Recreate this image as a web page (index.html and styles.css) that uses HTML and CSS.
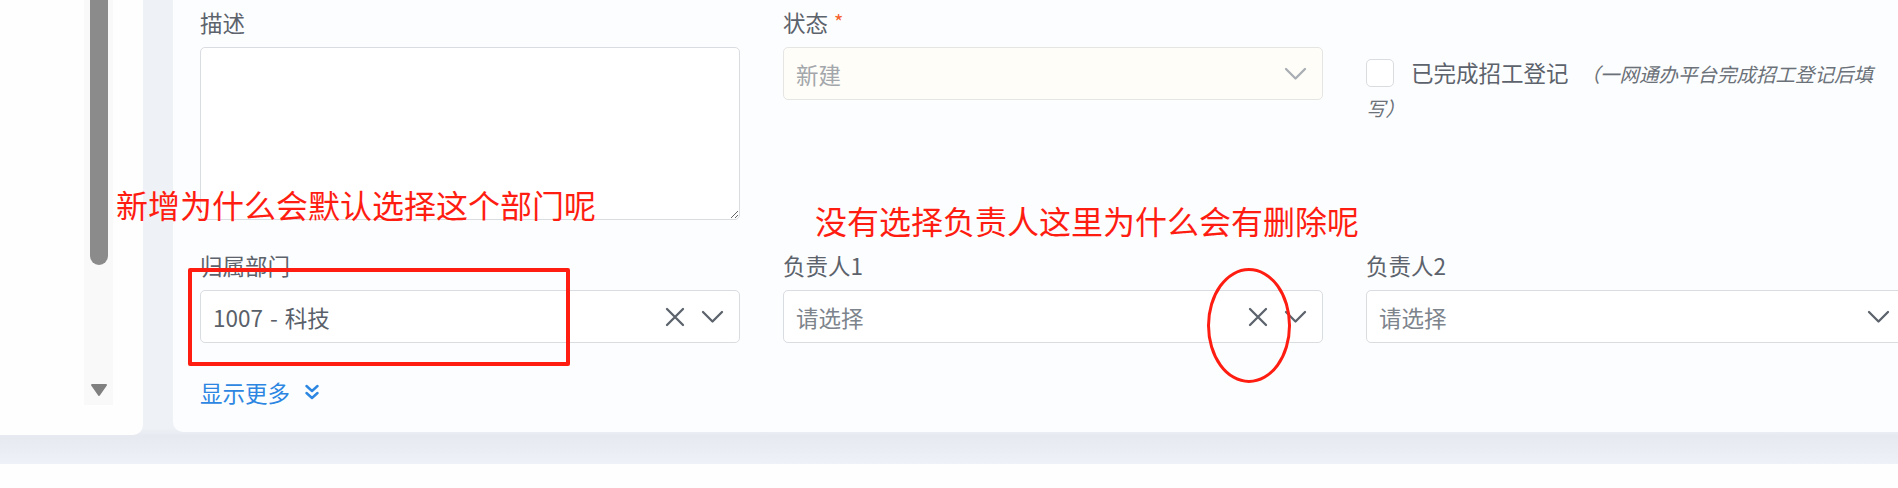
FILE: index.html
```html
<!DOCTYPE html>
<html lang="zh-CN">
<head>
<meta charset="utf-8">
<title>表单</title>
<link rel="stylesheet" href="styles.css">
</head>
<body>
<div class="app">
  <div class="top">
    <aside class="sidebar">
      <div class="scroll-track">
        <div class="scroll-thumb"></div>
        <svg class="scroll-arrow" width="18" height="14" viewBox="0 0 18 14"><path d="M2 2 H16 L9 12 Z" fill="#808080" stroke="#808080" stroke-width="2" stroke-linejoin="round"/></svg>
      </div>
    </aside>
    <main class="card">
      <div class="form-grid">
        <div class="field">
          <div class="label">描述</div>
          <textarea class="textarea"></textarea>
        </div>
        <div class="field">
          <div class="label">状态<span class="req">*</span></div>
          <div class="select disabled">
            <span class="value">新建</span>
            <svg class="chev" width="23" height="14" viewBox="0 0 23 14"><path d="M2 2 L11.5 11.5 L21 2" fill="none" stroke="#a9aeb4" stroke-width="2.3" stroke-linecap="round" stroke-linejoin="round"/></svg>
          </div>
        </div>
        <div class="field check-field">
          <span class="checkbox"></span><span class="check-label">已完成招工登记</span><span class="note">（一网通办平台完成招工登记后填写）</span>
        </div>

        <div class="field">
          <div class="label">归属部门</div>
          <div class="select">
            <span class="value filled">1007 - 科技</span>
            <svg class="clear" width="20" height="20" viewBox="0 0 20 20"><path d="M2 2 L18 18 M18 2 L2 18" stroke="#5c636c" stroke-width="2.3" stroke-linecap="round"/></svg>
            <svg class="chev" width="23" height="14" viewBox="0 0 23 14"><path d="M2 2 L11.5 11.5 L21 2" fill="none" stroke="#5c636c" stroke-width="2.3" stroke-linecap="round" stroke-linejoin="round"/></svg>
          </div>
        </div>
        <div class="field">
          <div class="label">负责人1</div>
          <div class="select">
            <span class="value placeholder">请选择</span>
            <svg class="clear" width="20" height="20" viewBox="0 0 20 20"><path d="M2 2 L18 18 M18 2 L2 18" stroke="#5c636c" stroke-width="2.3" stroke-linecap="round"/></svg>
            <svg class="chev" width="23" height="14" viewBox="0 0 23 14"><path d="M2 2 L11.5 11.5 L21 2" fill="none" stroke="#5c636c" stroke-width="2.3" stroke-linecap="round" stroke-linejoin="round"/></svg>
          </div>
        </div>
        <div class="field">
          <div class="label">负责人2</div>
          <div class="select">
            <span class="value placeholder">请选择</span>
            <svg class="chev" width="23" height="14" viewBox="0 0 23 14"><path d="M2 2 L11.5 11.5 L21 2" fill="none" stroke="#5c636c" stroke-width="2.3" stroke-linecap="round" stroke-linejoin="round"/></svg>
          </div>
        </div>
      </div>
      <a class="more">显示更多<svg width="14" height="16" viewBox="0 0 14 16"><path d="M1.5 2 L7 7 L12.5 2 M1.5 9 L7 14 L12.5 9" fill="none" stroke="#2d87e2" stroke-width="2.4" stroke-linecap="round" stroke-linejoin="round"/></svg></a>
    </main>
  </div>
  <div class="footer"></div>

  <div class="annot-text annot-text-1">新增为什么会默认选择这个部门呢</div>
  <div class="annot-text annot-text-2">没有选择负责人这里为什么会有删除呢</div>
  <div class="annot-box"></div>
  <div class="annot-ellipse"></div>
</div>
</body>
</html>
```

FILE: styles.css
```css
* { box-sizing: border-box; }

html, body {
  margin: 0;
  padding: 0;
}

body {
  width: 1898px;
  height: 488px;
  overflow: hidden;
  background: #fefefe;
  font-family: "Noto Sans CJK SC", "Noto Sans", sans-serif;
  color: #5c636c;
}

.app {
  position: relative;
  width: 2000px;
}

.top {
  display: flex;
  align-items: flex-start;
  height: 464px;
  background: linear-gradient(to bottom, #eef1f6 0, #eef1f6 428px, #e6eaf0 436px, #eef2f8 464px);
}

.sidebar {
  width: 143px;
  height: 435px;
  background: #fefefe;
  border-bottom-right-radius: 10px;
  padding-left: 84px;
}

.scroll-track {
  width: 29px;
  height: 405px;
  background: #f9f9f9;
  display: flex;
  flex-direction: column;
  align-items: center;
}

.scroll-thumb {
  width: 18px;
  height: 265px;
  background: #8b8b8b;
  border-radius: 0 0 9px 9px;
}

.scroll-arrow {
  margin-top: auto;
  margin-bottom: 8px;
}

.card {
  margin-left: 30px;
  width: 1800px;
  height: 432px;
  background: #fcfdfe;
  border-radius: 0 0 10px 10px;
  padding: 7px 0 0 27px;
}

.form-grid {
  display: grid;
  grid-template-columns: repeat(3, 540px);
  column-gap: 43px;
  row-gap: 30px;
}

.field {
  display: flex;
  flex-direction: column;
}

.label {
  font-size: 22.5px;
  line-height: 30px;
  height: 30px;
  margin-bottom: 10px;
  color: #5c636c;
}

.req {
  color: #f5622d;
  margin-left: 6px;
  font-size: 20px;
  vertical-align: top;
}

.textarea {
  display: block;
  width: 540px;
  height: 173px;
  border: 1px solid #d9dce1;
  border-radius: 5px;
  background: #fff;
  resize: vertical;
  font-family: inherit;
  margin: 0;
}

.select {
  height: 53px;
  border: 1px solid #d9dce1;
  border-radius: 5px;
  background: #fff;
  display: flex;
  align-items: center;
  padding: 0 15px 0 12px;
}

.select.disabled {
  background: #fffdf8;
  border-color: #e5e5e4;
}

.value {
  margin-right: auto;
  font-size: 22.5px;
  line-height: 30px;
  color: #a3a7ab;
}

.value.filled {
  color: #5a6069;
  word-spacing: 2px;
}

.value.placeholder {
  color: #7d848c;
}

.clear {
  margin-right: 16px;
}

.check-field {
  display: block;
  width: 512px;
  margin-top: 49px;
  line-height: 32px;
}

.checkbox {
  display: inline-block;
  width: 28px;
  height: 28px;
  border: 1px solid #d9dce1;
  border-radius: 5px;
  background: #fff;
  vertical-align: middle;
  margin-right: 17px;
  position: relative;
  top: -5px;
}

.check-label {
  font-size: 22.5px;
  color: #5c636c;
  margin-right: 12px;
}

.note {
  font-size: 19.5px;
  font-style: italic;
  color: #6b7178;
}

.more {
  display: inline-flex;
  align-items: center;
  margin-top: 34px;
  height: 30px;
  font-size: 22.5px;
  line-height: 30px;
  color: #2d87e2;
  gap: 15px;
  cursor: pointer;
}

.footer {
  height: 24px;
  background: #fefefe;
}

/* Annotation overlay (red markings drawn on top of the screenshot) */
.annot-text {
  position: absolute;
  font-size: 32px;
  line-height: 32px;
  color: #ff1d12;
  white-space: nowrap;
  font-family: "Noto Sans CJK SC", sans-serif;
}

.annot-text-1 {
  left: 116px;
  top: 188px;
}

.annot-text-2 {
  left: 815px;
  top: 204px;
}

.annot-box {
  position: absolute;
  left: 188px;
  top: 268px;
  width: 382px;
  height: 98px;
  border: 4px solid #ff1d12;
  border-radius: 2px;
}

.annot-ellipse {
  position: absolute;
  left: 1207px;
  top: 268px;
  width: 84px;
  height: 115px;
  border: 3px solid #ff1d12;
  border-radius: 50%;
}
```
